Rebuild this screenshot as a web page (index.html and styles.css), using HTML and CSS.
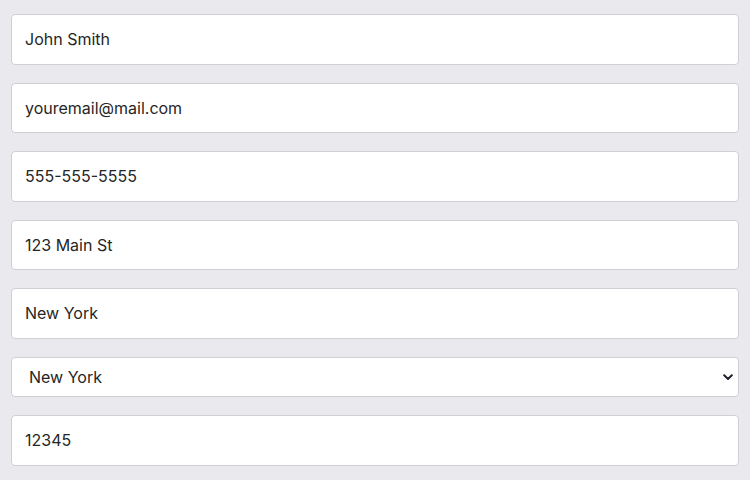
FILE: index.html
```html
<!DOCTYPE html>
<html lang="en">
<head>
<meta charset="utf-8">
<title>Form</title>
<link rel="stylesheet" href="styles.css">
</head>
<body>
<form class="form">
  <input class="field" type="text" value="John Smith">
  <input class="field" type="email" value="youremail@mail.com">
  <input class="field" type="tel" value="555-555-5555">
  <input class="field" type="text" value="123 Main St">
  <input class="field" type="text" value="New York">
  <div class="select-wrap">
    <select class="select">
      <option>New York</option>
    </select>
    <svg class="chevron" width="10" height="7" viewBox="0 0 10 7"><path d="M1.2 1.3 L5 5 L8.8 1.3" fill="none" stroke="#1d2129" stroke-width="2" stroke-linecap="round" stroke-linejoin="round"/></svg>
  </div>
  <input class="field" type="text" value="12345">
</form>
</body>
</html>
```
FILE: styles.css
```css
html, body {
  margin: 0;
  background: #e9e9ee;
}
body {
  padding: 14px 11px;
  font-family: "Inter", "Liberation Sans", sans-serif;
}
.form {
  display: flex;
  flex-direction: column;
  gap: 18px;
}
.field, .select {
  box-sizing: border-box;
  width: 100%;
  margin: 0;
  background: #fff;
  border: 1px solid #cdd1d6;
  border-radius: 4px;
  font-family: inherit;
  font-size: 16px;
  font-weight: 400;
  color: #262626;
  outline: none;
}
.field {
  height: 50.5px;
  padding: 0 13px;
}
.select-wrap {
  position: relative;
}
.select {
  -webkit-appearance: none;
  appearance: none;
  height: 40.5px;
  padding: 1px 17px 0;
}
.chevron {
  position: absolute;
  right: 6px;
  top: 17px;
  pointer-events: none;
}
```
